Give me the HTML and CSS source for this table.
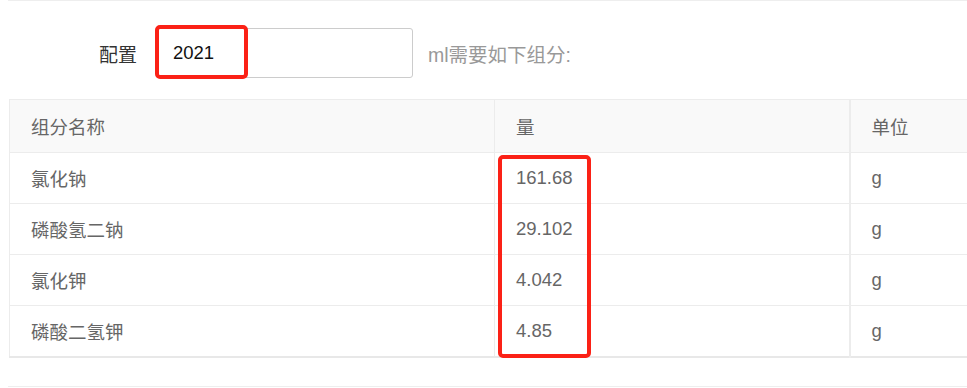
FILE: index.html
```html
<!DOCTYPE html>
<html lang="zh-CN">
<head>
<meta charset="utf-8">
<title>配置</title>
<link rel="stylesheet" href="styles.css">
</head>
<body>
<div class="panel">
  <div class="form-row">
    <label class="label" for="vol">配置</label>
    <input id="vol" class="input" type="text" value="2021">
    <span class="hint">ml需要如下组分:</span>
  </div>
  <table class="grid">
    <colgroup>
      <col class="c1"><col class="c2"><col class="c3">
    </colgroup>
    <thead>
      <tr class="head"><th>组分名称</th><th>量</th><th>单位</th></tr>
    </thead>
    <tbody>
      <tr><td>氯化钠</td><td>161.68</td><td>g</td></tr>
      <tr><td>磷酸氢二钠</td><td>29.102</td><td>g</td></tr>
      <tr><td>氯化钾</td><td>4.042</td><td>g</td></tr>
      <tr><td>磷酸二氢钾</td><td>4.85</td><td>g</td></tr>
    </tbody>
  </table>
</div>
<div class="next"></div>
<div class="mark mark-input"></div>
<div class="mark mark-col"></div>
</body>
</html>
```
FILE: styles.css
```css
html, body {
  margin: 0;
  padding: 0;
  background: #fff;
  overflow: hidden;
}
body {
  width: 967px;
  height: 388px;
  position: relative;
  font-family: "Liberation Sans", "Noto Sans CJK SC", sans-serif;
  font-size: 18.5px;
  color: #666;
}
.panel {
  margin-left: 8px;
  border-top: 1px solid #eeeeee;
  padding-top: 27px;
  height: 358px;
  box-sizing: border-box;
}
.form-row {
  display: flex;
  align-items: center;
  height: 50px;
}
.label {
  width: 129px;
  text-align: right;
  color: #333;
  font-size: 19px;
}
.input {
  margin-left: 20px;
  width: 256px;
  height: 50px;
  box-sizing: border-box;
  border: 1px solid #cccccc;
  border-radius: 3px;
  padding: 0 15px;
  font-family: "Liberation Sans", "Noto Sans CJK SC", sans-serif;
  font-size: 18.5px;
  color: #111;
  outline: none;
}
.hint {
  margin-left: 15px;
  color: #999;
  font-size: 19.5px;
}
.grid {
  margin-top: 21px;
  margin-left: 1px;
  width: 1000px;
  border-collapse: collapse;
  table-layout: fixed;
  border-bottom: 2px solid #e8e8e8;
}
.c1 { width: 485px; }
.c2 { width: 355px; }
.c3 { width: 160px; }
.grid th, .grid td {
  border: 1px solid #ececec;
  padding: 0 0 0 21px;
  text-align: left;
  font-weight: normal;
  color: #666;
  height: 51px;
  box-sizing: border-box;
}
.grid .head th {
  background: #f9f9f9;
  height: 53px;
}
.grid td:nth-child(3), .grid th:nth-child(3) {
  border-left-width: 2px;
}
.next {
  margin-left: 8px;
  margin-top: 28px;
  border-top: 1px solid #eeeeee;
}
.mark {
  position: absolute;
  border: 4px solid #fb2116;
  border-radius: 5px;
  box-sizing: border-box;
}
.mark-input {
  left: 155px;
  top: 25px;
  width: 93px;
  height: 54px;
}
.mark-col {
  left: 498px;
  top: 155px;
  width: 93px;
  height: 203px;
}
```
